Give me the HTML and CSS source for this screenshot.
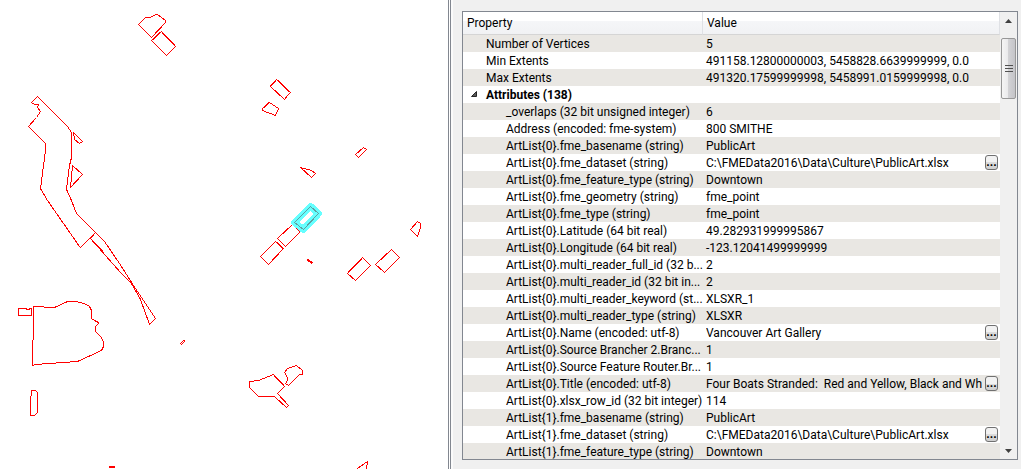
FILE: index.html
```
<!DOCTYPE html>
<html lang="en">
<head>
    <meta charset="UTF-8">
    <meta name="viewport" content="width=device-width, initial-scale=1.0">
    <title>Feature Information</title>
    <link rel="stylesheet" href="styles.css">
</head>
<body>
    <!-- Map view -->
    <main class="map">
        <svg class="map-canvas" role="img" aria-label="Map of building outlines">
            <g class="outlines" transform="translate(.5 .5)">
                <path d="M37 96L31 102L34 104L38 104L37 107L40 111L36 117L28 126L45 143L45 150L40 188L47 200L79 246L80 247L95 232L76 213L71 200L66 189L69 165L71 157L71 132L67 126Z"/>
                <path d="M73 132L82 141L79 143L74 139Z"/>
                <path d="M72 165L82 174L70 187Z"/>
                <path d="M95 232L104 241L119 263L133 285L155 318L149 324L144 310L140 299L131 283L120 272L90 238Z"/>
                <path d="M33 306L43 306L44 307L54 307L65 302L67 301L75 301L84 303L89 306L91 310L91 318L94 320L98 322L98 323L95 326L95 331L100 336L103 341L103 346L101 350L77 361L63 362L49 363L35 364L32 365L32 340L33 339Z"/>
                <path d="M18 308L25 308L27 309L31 308L31 315L18 315Z"/>
                <path d="M31 390L35 390L37 392L37 412L34 415L30 415L30 396L31 395Z"/>
                <path d="M180 343L183 340L184 340L184 341L181 344Z"/>
                <path d="M138 24L145 17L150 17L155 14L157 14L165 20L165 22L151 37Z"/>
                <path d="M161 31L175 46L166 55L151 40Z"/>
                <path d="M276 79L290 92L287 95L284 99L270 86Z"/>
                <path d="M269 102L278 108L275 115L262 110L262 108Z"/>
                <path d="M300 167L311 170L315 173L311 177Z"/>
                <path d="M363 147L366 149L358 157L355 154Z"/>
                <path d="M292 224L300 231L285 246L277 238Z"/>
                <path d="M275 241L283 248L268 264L260 256Z"/>
                <path d="M362 257L370 265L355 280L347 273Z"/>
                <path d="M391 249L399 257L384 272L375 264Z"/>
                <path d="M417 221L420 223L420 227L417 236L410 229Z"/>
                <path d="M249 381L258 380L273 374L284 386L277 393L288 405L286 407L274 396L258 396L249 387Z"/>
                <path d="M284 372L287 368L296 365L302 370L302 374L299 374L288 385L285 383L287 380L287 377Z"/>
                <path d="M357 468L367 461L366 469"/>
                <path class="heavy" d="M307 259L312 263M108 466L114 466"/>
                <!-- Edges shared by two outlines -->
                <path class="double" d="M147 33L151 37M151 40L161 31L175 46L170 51M270 86L276 79L290 92M262 108L269 102M292 224L300 231L285 246M275 241L283 248M260 256L268 264M347 273L362 257M391 249L399 257L384 272M273 374L284 386M288 385L299 374M90 238L103 251"/>
            </g>
            <!-- Selected feature -->
            <g transform="translate(.5 .5)">
                <path class="halo" d="M310 206L318 213L303 229L294 222Z"/>
                <path class="selected" d="M310 206L318 213L303 229L294 222Z"/>
            </g>
        </svg>
    </main>

    <!-- Feature information -->
    <aside class="panel">
        <div class="tree">
            <div class="tree-view">
                <table class="properties">
                    <thead>
                        <tr><th class="col-property" scope="col">Property</th><th scope="col">Value</th></tr>
                    </thead>
                    <tbody>
                        <tr><td>Number of Vertices</td><td>5</td></tr>
                        <tr><td>Min Extents</td><td>491158.12800000003, 5458828.6639999999, 0.0</td></tr>
                        <tr><td>Max Extents</td><td>491320.17599999998, 5458991.0159999998, 0.0</td></tr>
                        <tr class="group"><td><button class="toggle" aria-label="Collapse Attributes" aria-expanded="true"><svg width="6" height="6"><path d="M5.5 .5V5.5H.5Z"/></svg></button>Attributes (138)</td><td></td></tr>
                        <tr class="attr"><td>_overlaps (32 bit unsigned integer)</td><td>6</td></tr>
                        <tr class="attr"><td>Address (encoded: fme-system)</td><td>800 SMITHE</td></tr>
                        <tr class="attr"><td>ArtList{0}.fme_basename (string)</td><td>PublicArt</td></tr>
                        <tr class="attr"><td>ArtList{0}.fme_dataset (string)</td><td><div class="long"><span>C:\FMEData2016\Data\Culture\PublicArt.xlsx</span><button class="more">...</button></div></td></tr>
                        <tr class="attr"><td>ArtList{0}.fme_feature_type (string)</td><td>Downtown</td></tr>
                        <tr class="attr"><td>ArtList{0}.fme_geometry (string)</td><td>fme_point</td></tr>
                        <tr class="attr"><td>ArtList{0}.fme_type (string)</td><td>fme_point</td></tr>
                        <tr class="attr"><td>ArtList{0}.Latitude (64 bit real)</td><td>49.282931999995867</td></tr>
                        <tr class="attr"><td>ArtList{0}.Longitude (64 bit real)</td><td>-123.12041499999999</td></tr>
                        <tr class="attr"><td>ArtList{0}.multi_reader_full_id (32 b...</td><td>2</td></tr>
                        <tr class="attr"><td>ArtList{0}.multi_reader_id (32 bit in...</td><td>2</td></tr>
                        <tr class="attr"><td>ArtList{0}.multi_reader_keyword (st...</td><td>XLSXR_1</td></tr>
                        <tr class="attr"><td>ArtList{0}.multi_reader_type (string)</td><td>XLSXR</td></tr>
                        <tr class="attr"><td>ArtList{0}.Name (encoded: utf-8)</td><td><div class="long"><span>Vancouver Art Gallery</span><button class="more">...</button></div></td></tr>
                        <tr class="attr"><td>ArtList{0}.Source Brancher 2.Branc...</td><td>1</td></tr>
                        <tr class="attr"><td>ArtList{0}.Source Feature Router.Br...</td><td>1</td></tr>
                        <tr class="attr"><td>ArtList{0}.Title (encoded: utf-8)</td><td><div class="long"><span>Four Boats Stranded:&nbsp; Red and Yellow, Black and Wh</span><button class="more">...</button></div></td></tr>
                        <tr class="attr"><td>ArtList{0}.xlsx_row_id (32 bit integer)</td><td>114</td></tr>
                        <tr class="attr"><td>ArtList{1}.fme_basename (string)</td><td>PublicArt</td></tr>
                        <tr class="attr"><td>ArtList{1}.fme_dataset (string)</td><td><div class="long"><span>C:\FMEData2016\Data\Culture\PublicArt.xlsx</span><button class="more">...</button></div></td></tr>
                        <tr class="attr"><td>ArtList{1}.fme_feature_type (string)</td><td>Downtown</td></tr>
                    </tbody>
                </table>
            </div>
            <div class="scrollbar">
                <button class="arrow" aria-label="Scroll up"><svg width="7" height="4"><path d="M0 4L3.5 0L7 4Z"/></svg></button>
                <div class="track"><div class="thumb"><svg width="8" height="9"><path d="M0 1.5H8M0 4.5H8M0 7.5H8"/></svg></div></div>
                <button class="arrow" aria-label="Scroll down"><svg width="7" height="4"><path d="M0 0L3.5 4L7 0Z"/></svg></button>
            </div>
        </div>
    </aside>
</body>
</html>
```
FILE: styles.css
```
/* General Styles */
* {
    box-sizing: border-box;
}
body {
    margin: 0;
    height: 100vh;
    display: flex;
    overflow: hidden;
    background: #fff;
    color: #000;
    font-family: Roboto, "Open Sans", sans-serif;
    font-size: 12px;
}
button {
    padding: 0;
    border: none;
    background: none;
    font: inherit;
    color: inherit;
}
svg {
    display: block;
}

/* Map */
.map {
    flex: 1 1 449px;
    min-width: 0;
    border-right: 1px solid #828790;
}
.map-canvas {
    width: 100%;
    height: 100%;
}
.outlines path {
    fill: none;
    stroke: #f00;
    shape-rendering: crispEdges;
}
.outlines .heavy {
    stroke-width: 2px;
}
.outlines .double {
    stroke-width: 1.3px;
}
.halo {
    fill: none;
    stroke: #6ff;
    stroke-width: 7px;
    stroke-linejoin: round;
    shape-rendering: crispEdges;
}
.selected {
    fill: none;
    stroke: #5f9f9f;
    shape-rendering: crispEdges;
}

/* Panel */
.panel {
    flex: 1 1 571px;
    min-width: 0;
    margin-left: 1px;
    padding: 11px 3px 9px 9px;
    border-left: 1px solid #828790;
    background: #f0f0f0;
    box-shadow: inset 2px 0 #fafafa;
}
.tree {
    display: flex;
    height: 100%;
    margin-left: 2px;
    border: 1px solid #828790;
    background: #fff;
}
.tree-view {
    flex: 1;
    min-width: 0;
    overflow: hidden;
}

/* Property table */
.properties {
    width: 100%;
    table-layout: fixed;
    border-collapse: separate;
    border-spacing: 0;
}
th {
    height: 23px;
    padding: 1px 4px 0;
    border-right: 1px solid #dfe1e5;
    border-bottom: 1px solid #d5d5d5;
    background: linear-gradient(#fff 40%, #f5f6f8 40%, #f1f2f4);
    font-weight: normal;
    line-height: 21px;
    text-align: left;
}
.col-property {
    width: 240px;
}
td {
    height: 17px;
    padding: 1px 0 0 3px;
    line-height: 16px;
    white-space: nowrap;
    overflow: hidden;
}
td:first-child {
    padding-left: 23px;
}
.attr td:first-child {
    padding-left: 43px;
}
tbody tr:nth-child(odd) {
    background: #e9e7e3;
}
.group td {
    font-weight: bold;
}
.group td:first-child {
    padding-left: 8px;
}
.toggle {
    width: 15px;
    height: 10px;
    vertical-align: baseline;
}
.toggle path {
    fill: #595959;
    stroke: #262626;
}

/* Values that open in their own window */
.long {
    display: flex;
    height: 16px;
    padding-right: 2px;
}
.long span {
    flex: 1;
    min-width: 0;
    overflow: hidden;
}
.more {
    width: 13px;
    height: 15px;
    margin-left: 2px;
    border: 1px solid #707070;
    border-radius: 3px;
    background: linear-gradient(#f2f2f2 50%, #dcdcdc 50%, #cfcfcf);
    font-weight: bold;
    line-height: 11px;
}

/* Scrollbar */
.scrollbar {
    flex: none;
    display: flex;
    flex-direction: column;
    width: 17px;
    padding: 0 1px;
    background: #f0f0f0;
}
.arrow {
    display: flex;
    align-items: center;
    justify-content: center;
    height: 17px;
}
.arrow path {
    fill: #404040;
}
.track {
    flex: 1;
    padding-top: 9px;
}
.thumb {
    display: flex;
    align-items: center;
    justify-content: center;
    height: 61px;
    border: 1px solid #979797;
    border-radius: 2px;
    background: linear-gradient(90deg, #f5f5f5, #e9e9eb 50%, #d2d2d5 50%, #c4c4c8);
}
.thumb path {
    stroke: #505050;
}
```
